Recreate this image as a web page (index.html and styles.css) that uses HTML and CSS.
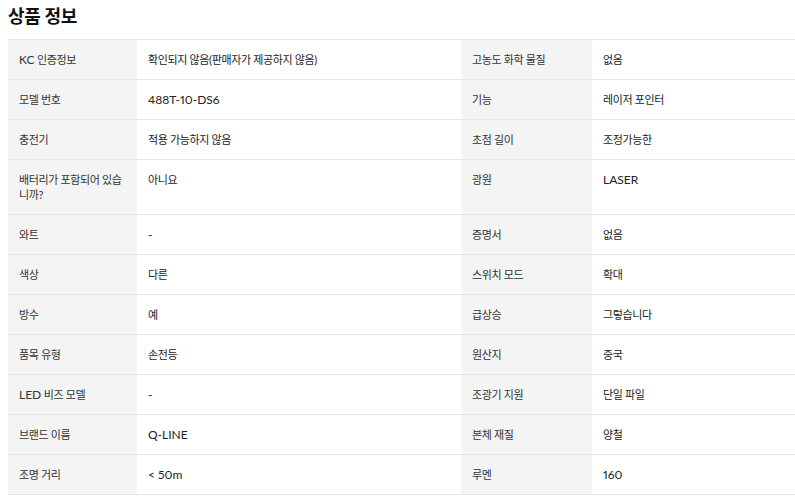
FILE: index.html
```html
<!DOCTYPE html>
<html lang="ko">
<head>
<meta charset="utf-8">
<link rel="stylesheet" href="styles.css">
</head>
<body>
<h2 class="title">상품 정보</h2>
<div class="spec">
  <div class="row"><div class="k"><span class="en">KC</span> 인증정보</div><div class="v">확인되지 않음(판매자가 제공하지 않음)</div><div class="k">고농도 화학 물질</div><div class="v">없음</div></div>
  <div class="row"><div class="k">모델 번호</div><div class="v"><span class="en">488T-10-DS6</span></div><div class="k">기능</div><div class="v">레이저 포인터</div></div>
  <div class="row"><div class="k">충전기</div><div class="v">적용 가능하지 않음</div><div class="k">초점 길이</div><div class="v">조정가능한</div></div>
  <div class="row"><div class="k">배터리가 포함되어 있습니까?</div><div class="v">아니요</div><div class="k">광원</div><div class="v"><span class="en">LASER</span></div></div>
  <div class="row"><div class="k">와트</div><div class="v"><span class="en">-</span></div><div class="k">증명서</div><div class="v">없음</div></div>
  <div class="row"><div class="k">색상</div><div class="v">다른</div><div class="k">스위치 모드</div><div class="v">확대</div></div>
  <div class="row"><div class="k">방수</div><div class="v">예</div><div class="k">급상승</div><div class="v">그렇습니다</div></div>
  <div class="row"><div class="k">품목 유형</div><div class="v">손전등</div><div class="k">원산지</div><div class="v">중국</div></div>
  <div class="row"><div class="k"><span class="en">LED</span> 비즈 모델</div><div class="v"><span class="en">-</span></div><div class="k">조광기 지원</div><div class="v">단일 파일</div></div>
  <div class="row"><div class="k">브랜드 이름</div><div class="v"><span class="en">Q-LINE</span></div><div class="k">본체 재질</div><div class="v">양철</div></div>
  <div class="row"><div class="k">조명 거리</div><div class="v"><span class="en">&lt; 50m</span></div><div class="k">루멘</div><div class="v"><span class="en">160</span></div></div>
</div>
</body>
</html>
```
FILE: styles.css
```css
html, body {
  margin: 0;
  padding: 0;
  background: #fff;
}
body {
  padding-left: 8px;
  font-family: "Lato", "Noto Sans CJK KR", sans-serif;
  color: #222;
}
.title {
  margin: 0;
  padding-top: 5px;
  height: 39px;
  box-sizing: border-box;
  font-size: 18px;
  line-height: 22px;
  font-weight: 700;
  color: #111;
  letter-spacing: -0.3px;
}
.spec {
  border-top: 1px solid #e6e6e6;
  width: 787px;
}
.row {
  display: grid;
  grid-template-columns: 129px 324px 131px 1fr;
  border-bottom: 1px solid #e6e6e6;
}
.k, .v {
  padding: 12px 12px 12px 11px;
  font-size: 11px;
  letter-spacing: -0.35px;
  line-height: 15px;
  word-break: break-all;
}
.en {
  font-size: 12px;
  letter-spacing: 0;
  font-variant-numeric: proportional-nums;
}
.k {
  background: #f4f4f4;
  color: #333;
}
.v {
  color: #222;
}
```
